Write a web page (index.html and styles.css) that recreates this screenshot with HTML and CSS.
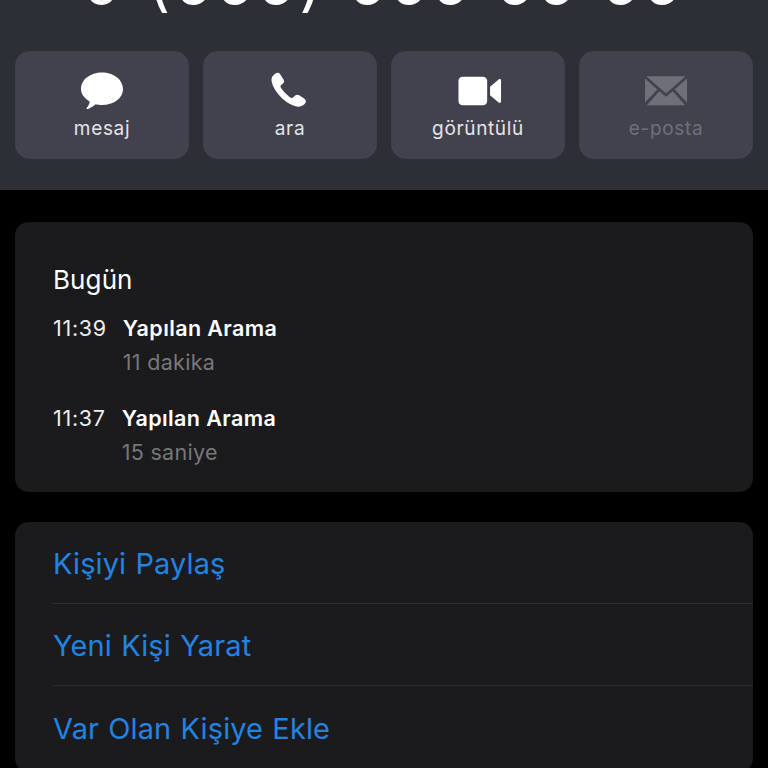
FILE: index.html
```html
<!DOCTYPE html>
<html lang="tr">
<head>
<meta charset="utf-8">
<title>Kişi</title>
<link rel="stylesheet" href="styles.css">
</head>
<body>
<header class="hero">
  <div class="number">0 (555) 555 55 55</div>
  <div class="actions">
    <div class="action">
      <svg class="icon" viewBox="0 0 44 40"><path fill="#fff" d="M22 1.500C33.500 1.500 43 8.500 43 18C43 27.500 33.500 34 22 34C19.500 34 17.500 33.800 15.500 33.200C13 35.500 9.500 37.500 7.500 38C6 38.300 6.500 37 7.200 36.200C8.500 34.700 9.500 32.500 9.700 30.500C4.500 27.500 1 23.300 1 18C1 8.500 10.500 1.500 22 1.500Z"/></svg>
      <span>mesaj</span>
    </div>
    <div class="action">
      <svg class="icon phone" viewBox="0 0 44 40"><path fill="#fff" d="M9.500 2.500C11 1.300 13 1.500 14 3L17.500 8.500C18.400 10 18.200 11.500 17 12.500L15 14.300C14.400 14.900 14.300 15.500 14.700 16.300C16 19 21.500 25 25 26.800C25.800 27.200 26.400 27.100 27 26.500L29.200 24.500C30.400 23.500 32 23.400 33.200 24.200L38.500 27.700C40 28.700 40.300 30.700 39.300 32.100C37.800 34.300 35 36 32.300 35.700C25 35 17 29 12.500 23.500C8.500 18.500 5.500 13 5.500 8.500C5.500 6 7.300 3.900 9.500 2.500Z"/></svg>
      <span>ara</span>
    </div>
    <div class="action">
      <svg class="icon video" viewBox="0 0 46 40"><path fill="#fff" d="M5 5H26C28.800 5 30.500 6.800 30.500 9.500V30.500C30.500 33.200 28.800 35 26 35H5C2.200 35 .5 33.200 .5 30.500V9.500C.5 6.800 2.200 5 5 5ZM33.500 15.500L42.500 8C43.800 7 45 7.700 45 9.200V30.800C45 32.300 43.800 33 42.500 32L33.500 24.500Z"/></svg>
      <span>görüntülü</span>
    </div>
    <div class="action off">
      <svg class="icon" viewBox="0 0 46 40"><path fill="#6e7079" d="M2.500 4.500H43.500L23 22.500ZM1 7L14 18.500L1 32ZM45 7V32L32 18.500ZM16 20.300L23 26L30 20.300L43 35H3Z"/></svg>
      <span>e-posta</span>
    </div>
  </div>
</header>
<main class="content">
  <section class="card log">
    <h2 class="day">Bugün</h2>
    <div class="call">
      <span class="time">11:39</span>
      <div class="detail"><div class="kind">Yapılan Arama</div><div class="length">11 dakika</div></div>
    </div>
    <div class="call">
      <span class="time">11:37</span>
      <div class="detail"><div class="kind">Yapılan Arama</div><div class="length">15 saniye</div></div>
    </div>
  </section>
  <section class="card links">
    <div class="link">Kişiyi Paylaş</div>
    <div class="link">Yeni Kişi Yarat</div>
    <div class="link">Var Olan Kişiye Ekle</div>
  </section>
</main>
</body>
</html>
```
FILE: styles.css
```css
* { box-sizing: border-box; }
html, body { margin: 0; height: 768px; overflow: hidden; background: #000; }
body { font-family: Inter, "Noto Sans", sans-serif; color: #fff; }
.hero {
  height: 190px;
  background: #2d2f37;
  padding: 0 15px;
  overflow: hidden;
}
.number {
  height: 51px;
  margin-top: -47px;
  text-align: center;
  font-size: 60px;
  line-height: 60px;
  letter-spacing: 5px;
  word-spacing: 1px;
  white-space: nowrap;
}
.actions { display: grid; grid-template-columns: repeat(4, 174px); column-gap: 14px; margin-top: 47px; }
.action {
  height: 108px;
  background: #41424e;
  border-radius: 15px;
  display: flex;
  flex-direction: column;
  align-items: center;
  padding-top: 20px;
  font-size: 19px;
  letter-spacing: .65px;
  color: #e4e4e8;
}
.action span { margin-top: 6px; line-height: 24px; }
.action .icon { width: 44px; height: 40px; display: block; }
.action .phone { transform: translateX(-2px); }
.action .video { transform: translateX(2px); }
.action.off { color: #6e7079; }
.content { padding: 32px 15px 0; }
.card { background: #1b1b1d; border-radius: 14px; width: 738px; }
.log { height: 270px; padding: 43px 38px 0; }
.day { margin: 0; font-size: 26px; font-weight: 400; line-height: 30px; letter-spacing: .1px; }
.call { display: flex; gap: 16px; font-size: 21.500px; letter-spacing: .4px; margin-top: 19px; }
.call + .call { margin-top: 28px; }
.time { color: #eee; line-height: 28px; letter-spacing: .7px; }
.kind { font-weight: 600; line-height: 28px; }
.length { color: #77777b; line-height: 28px; margin-top: 6px; letter-spacing: .3px; }
.links { margin-top: 30px; height: 250px; padding-left: 38px; }
.link {
  height: 82px;
  display: flex;
  align-items: center;
  padding-top: 2px;
  font-size: 29px;
  letter-spacing: .1px;
  word-spacing: 1px;
  color: #2283e2;
  border-bottom: 1px solid #2c2c2e;
}
.link:last-child { border-bottom: 0; }
```
